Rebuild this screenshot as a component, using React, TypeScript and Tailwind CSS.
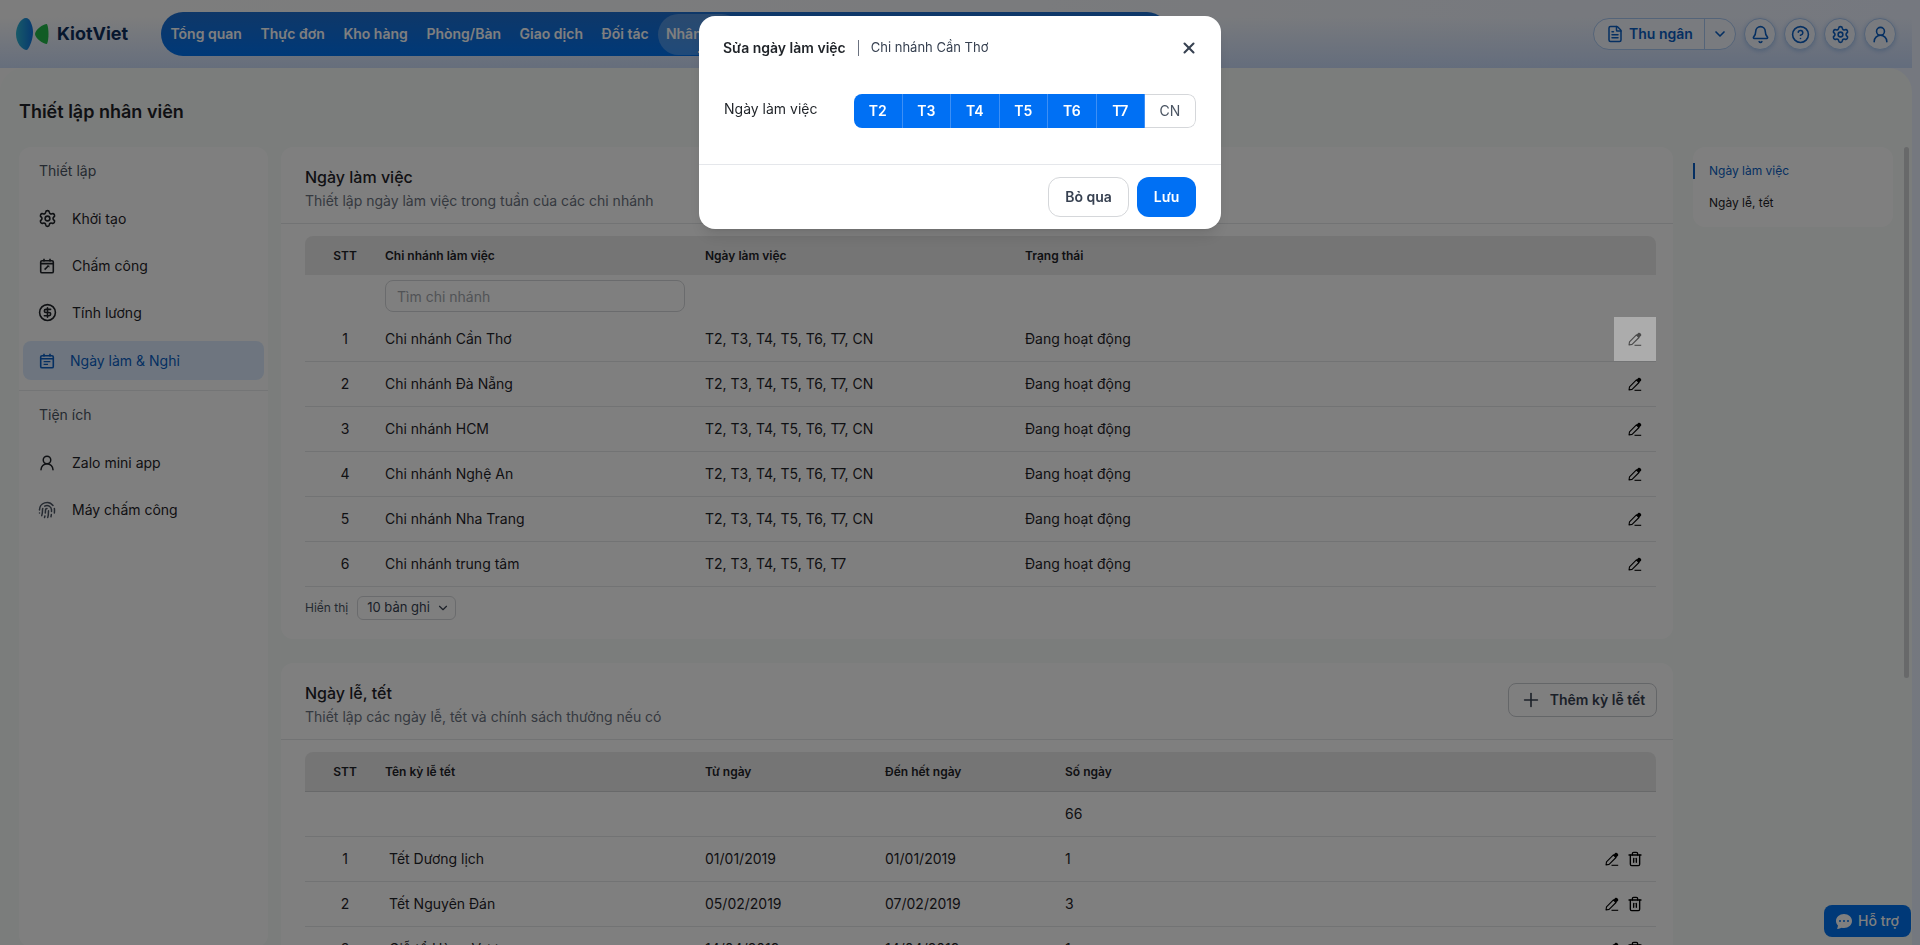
import { Bell, ChevronDown, CircleDollarSign, CircleHelp, FileText, Fingerprint, Plus, Settings, Trash2, UserRound, X } from 'lucide-react';
import { BsChatDotsFill } from 'react-icons/bs';

const branches = [
    { name: 'Chi nhánh Cần Thơ', days: 'T2, T3, T4, T5, T6, T7, CN' },
    { name: 'Chi nhánh Đà Nẵng', days: 'T2, T3, T4, T5, T6, T7, CN' },
    { name: 'Chi nhánh HCM', days: 'T2, T3, T4, T5, T6, T7, CN' },
    { name: 'Chi nhánh Nghệ An', days: 'T2, T3, T4, T5, T6, T7, CN' },
    { name: 'Chi nhánh Nha Trang', days: 'T2, T3, T4, T5, T6, T7, CN' },
    { name: 'Chi nhánh trung tâm', days: 'T2, T3, T4, T5, T6, T7' },
];

const holidays = [
    { name: 'Tết Dương lịch', from: '01/01/2019', to: '01/01/2019', count: '1' },
    { name: 'Tết Nguyên Đán', from: '05/02/2019', to: '07/02/2019', count: '3' },
    { name: 'Giỗ tổ Hùng Vương', from: '14/04/2019', to: '14/04/2019', count: '1' },
];

const navItems = ['Tổng quan', 'Thực đơn', 'Kho hàng', 'Phòng/Bàn', 'Giao dịch', 'Đối tác'];
const weekDays = ['T2', 'T3', 'T4', 'T5', 'T6', 'T7'];

function Logo() {
    return (
        <svg width="34" height="34" viewBox="0 0 34 34" className="shrink-0">
            <defs>
                <linearGradient id="lens" x1="0" y1="0" x2="1" y2="0">
                    <stop offset="0" stopColor="#2fb4d0" />
                    <stop offset="1" stopColor="#0f74e0" />
                </linearGradient>
            </defs>
            <path d="M10 1 C14 1 17 9 17 15 C17 22 14 30 11 33 C6 33 0 26 0 17 C0 9 5 1 10 1 Z" fill="url(#lens)" />
            <path d="M31 7 C33 12 33 22 31 27 C27 27 19 21 19 17 C19 13 27 7 31 7 Z" fill="#22b84a" />
        </svg>
    );
}

function PencilIcon({ className = '' }: { className?: string }) {
    return (
        <svg width="14" height="14" viewBox="0 0 14 14" fill="none" className={className}>
            <path d="M1 13 L1.5 9.8 L8.4 2.9 L11 5.5 L4.1 12.4 Z" stroke="currentColor" strokeWidth="1.1" strokeLinejoin="round" />
            <path d="M8.4 2.9 L10 1.2 C10.8 0.5 11.8 0.6 12.6 1.4 C13.4 2.2 13.5 3.2 12.8 3.9 L11 5.5 Z" fill="currentColor" />
            <path d="M6.5 13.3 H13.2" stroke="currentColor" strokeWidth="1.1" />
        </svg>
    );
}

function TimesheetIcon() {
    return (
        <svg width="16" height="16" viewBox="0 0 16 16" fill="none" className="text-[#1f2328]">
            <rect x="1.7" y="2.7" width="12.6" height="12.1" rx="1.4" stroke="currentColor" strokeWidth="1.6" />
            <path d="M1.7 5.6 H14.3 M5 0.8 V3.4 M11 0.8 V3.4" stroke="currentColor" strokeWidth="1.6" />
            <path d="M5.6 11.6 L9.4 7.8" stroke="currentColor" strokeWidth="1.6" />
            <path d="M8.2 7.6 H10.4 V9.8 Z" fill="currentColor" />
        </svg>
    );
}

function WorkdayIcon() {
    return (
        <svg width="16" height="16" viewBox="0 0 16 16" fill="none" className="text-[#0a5fc4]">
            <rect x="1.7" y="2.7" width="12.6" height="12.1" rx="1.4" stroke="currentColor" strokeWidth="1.6" />
            <path d="M1.7 5.8 H14.3 M5 0.8 V3.4 M11 0.8 V3.4" stroke="currentColor" strokeWidth="1.6" />
            <path d="M4.6 8.6 H11.4 M4.6 11.4 H9" stroke="currentColor" strokeWidth="1.4" />
        </svg>
    );
}

function SideItem({ icon, label }: { icon: React.ReactNode; label: string }) {
    return (
        <div className="flex h-[47px] items-center gap-[17px] pl-5 text-sm text-[#1f2328]">
            <span className="flex w-4 justify-center">{icon}</span>
            <span>{label}</span>
        </div>
    );
}

function CircleButton({ children }: { children: React.ReactNode }) {
    return (
        <div className="flex h-8 w-8 items-center justify-center rounded-full border border-[#a9c8f2] bg-[#f3f7ff] text-[#0a5fc4] shadow-[0_1px_4px_rgba(10,95,196,0.25)]">
            {children}
        </div>
    );
}

function CardHeader({ title, subtitle, action }: { title: string; subtitle: string; action?: React.ReactNode }) {
    return (
        <div className="flex h-[77px] items-center justify-between border-b border-[#e4e6e8] pr-4 pl-6">
            <div className="pt-[7px]">
                <h2 className="text-base leading-6 font-medium text-[#1f2328]">{title}</h2>
                <p className="text-sm leading-6 text-[#6b7280]">{subtitle}</p>
            </div>
            {action}
        </div>
    );
}

const branchGrid = 'grid grid-cols-[80px_320px_320px_1fr_42px] items-center';
const holidayGrid = 'grid grid-cols-[80px_320px_180px_180px_1fr_64px] items-center';

export default function App() {
    return (
        <div className="relative h-[945px] w-[1920px] overflow-hidden bg-[linear-gradient(100deg,#fbfbfb_0%,#f4f6fa_50%,#e9f0ff_100%)] font-['Inter',sans-serif]">
            {/* Top bar */}
            <header className="flex h-[68px] w-[1912px] items-center bg-[linear-gradient(180deg,rgba(255,255,255,0)_25%,rgba(180,205,248,0.65)_100%)] pr-4 pl-4">
                <Logo />
                <span className="ml-[7px] text-lg font-bold text-[#0f2f5c]">KiotViet</span>
                <nav className="ml-[33px] flex h-11 w-[1008px] items-center rounded-full bg-[linear-gradient(180deg,#1e6fd0_0%,#0072f0_100%)] text-sm font-semibold text-white">
                    {navItems.map((item) => (
                        <span key={item} className="px-[9.3px]">{item}</span>
                    ))}
                    <span className="relative flex h-[41px] items-center rounded-full bg-white/25 px-2">
                        Nhân viên
                        <span className="absolute right-2 bottom-[2px] h-[2px] w-[36px] bg-white" />
                    </span>
                </nav>
                <div className="ml-auto flex items-center gap-2">
                    <div className="flex h-8 w-[143px] items-center rounded-full border border-[#a9c8f2] bg-[#f3f7ff] text-sm font-semibold text-[#0a5fc4]">
                        <div className="flex h-full flex-1 items-center gap-[5px] pl-[12px]">
                            <FileText size={18} />
                            <span>Thu ngân</span>
                        </div>
                        <div className="flex h-full w-[31px] items-center justify-center border-l border-[#a9c8f2]">
                            <ChevronDown size={16} strokeWidth={2.5} />
                        </div>
                    </div>
                    <CircleButton><Bell size={19} /></CircleButton>
                    <CircleButton><CircleHelp size={19} /></CircleButton>
                    <CircleButton><Settings size={19} /></CircleButton>
                    <CircleButton><UserRound size={19} /></CircleButton>
                </div>
            </header>

            {/* Page panel */}
            <main className="relative h-[877px] w-[1912px] overflow-hidden rounded-t-3xl bg-[#f6faf8]">
                <h1 className="flex h-[79px] items-center pt-[9px] pl-[19px] text-lg font-semibold text-[#1f2328]">Thiết lập nhân viên</h1>
                <div className="flex items-start pl-[19px]">
                    {/* Left menu */}
                    <aside className="h-[800px] w-[249px] shrink-0 rounded-xl bg-white">
                        <div className="flex h-[48px] items-center pl-5 text-sm text-[#4b5563]">Thiết lập</div>
                        <SideItem icon={<Settings size={19} className="shrink-0" />} label="Khởi tạo" />
                        <SideItem icon={<TimesheetIcon />} label="Chấm công" />
                        <SideItem icon={<CircleDollarSign size={19} className="shrink-0" />} label="Tính lương" />
                        <div className="mx-[4px] mt-[5px] flex h-[39px] w-[241px] items-center gap-[15px] rounded-lg bg-[#dcebff] pl-[16px] text-sm text-[#0a5fc4]">
                            <WorkdayIcon />
                            <span>Ngày làm &amp; Nghỉ</span>
                        </div>
                        <div className="mt-[10px] border-t border-[#e8eaec]" />
                        <div className="flex h-[48px] items-center pl-5 text-sm text-[#4b5563]">Tiện ích</div>
                        <SideItem icon={<UserRound size={18} className="shrink-0" />} label="Zalo mini app" />
                        <SideItem icon={<Fingerprint size={18} className="shrink-0 text-[#4b5563]" />} label="Máy chấm công" />
                    </aside>

                    {/* Content */}
                    <div className="ml-[13px] flex w-[1392px] shrink-0 flex-col gap-6">
                        <section className="h-[492px] rounded-xl bg-white">
                            <CardHeader title="Ngày làm việc" subtitle="Thiết lập ngày làm việc trong tuần của các chi nhánh" />
                            <div className="mx-6 mt-3 w-[1351px]">
                                <div className={`${branchGrid} h-[39px] rounded-t-lg bg-[#ebebeb] text-xs font-semibold text-[#1f2328]`}>
                                    <span className="text-center">STT</span>
                                    <span>Chi nhánh làm việc</span>
                                    <span>Ngày làm việc</span>
                                    <span>Trạng thái</span>
                                </div>
                                <div className={`${branchGrid} h-[42px]`}>
                                    <span />
                                    <input
                                        readOnly
                                        placeholder="Tìm chi nhánh"
                                        className="h-8 w-[300px] rounded-lg border border-[#d5d7da] bg-white px-[11px] text-sm outline-none placeholder:text-[#a3a7ad]"
                                    />
                                </div>
                                {branches.map((branch, i) => (
                                    <div key={branch.name} className={`${branchGrid} h-[45px] border-b border-[#e4e6e8] text-sm text-[#1f2328]`}>
                                        <span className="text-center">{i + 1}</span>
                                        <span>{branch.name}</span>
                                        <span>{branch.days}</span>
                                        <span>Đang hoạt động</span>
                                        {i === 0 ? (
                                            <span className="relative z-50 flex h-[44px] items-center justify-center bg-[#acacac] text-[#4a4a4a]">
                                                <PencilIcon />
                                            </span>
                                        ) : (
                                            <span className="flex justify-center text-black"><PencilIcon /></span>
                                        )}
                                    </div>
                                ))}
                                <div className="mt-[9px] flex items-center gap-[9px] text-xs text-[#4b5563]">
                                    <span>Hiển thị</span>
                                    <div className="flex h-6 w-[99px] items-center justify-between rounded-md border border-[#d5d7da] pr-[5px] pl-[9px] text-[#374151]">
                                        <span className="text-[13px]">10 bản ghi</span>
                                        <ChevronDown size={14} />
                                    </div>
                                </div>
                            </div>
                        </section>

                        <section className="rounded-xl bg-white pb-6">
                            <CardHeader
                                title="Ngày lễ, tết"
                                subtitle="Thiết lập các ngày lễ, tết và chính sách thưởng nếu có"
                                action={
                                    <div className="mb-[3px] flex h-[34px] w-[149px] items-center justify-center gap-[8px] rounded-lg border border-[#c9ccd1] text-sm font-semibold text-[#374151]">
                                        <Plus size={22} strokeWidth={1.75} />
                                        <span>Thêm kỳ lễ tết</span>
                                    </div>
                                }
                            />
                            <div className="mx-6 mt-3 w-[1351px]">
                                <div className={`${holidayGrid} h-[40px] rounded-t-lg border-b border-[#d0d2d4] bg-[#ebebeb] text-xs font-semibold text-[#1f2328]`}>
                                    <span className="text-center">STT</span>
                                    <span>Tên kỳ lễ tết</span>
                                    <span>Từ ngày</span>
                                    <span>Đến hết ngày</span>
                                    <span>Số ngày</span>
                                </div>
                                <div className={`${holidayGrid} h-[45px] border-b border-[#e4e6e8] text-sm text-[#1f2328]`}>
                                    <span />
                                    <span />
                                    <span />
                                    <span />
                                    <span>66</span>
                                </div>
                                {holidays.map((holiday, i) => (
                                    <div key={holiday.name} className={`${holidayGrid} h-[45px] border-b border-[#e4e6e8] text-sm text-[#1f2328]`}>
                                        <span className="text-center">{i + 1}</span>
                                        <span className="pl-1">{holiday.name}</span>
                                        <span>{holiday.from}</span>
                                        <span>{holiday.to}</span>
                                        <span>{holiday.count}</span>
                                        <span className="flex items-center justify-end gap-[8px] pr-[13px] text-black">
                                            <PencilIcon />
                                            <Trash2 size={16} />
                                        </span>
                                    </div>
                                ))}
                            </div>
                        </section>
                    </div>

                    {/* Right anchors */}
                    <div className="ml-5 flex h-[80px] w-[200px] shrink-0 flex-col justify-center gap-[16px] rounded-xl bg-white pl-4 text-xs">
                        <div className="relative leading-4 text-[#0a5fc4]">
                            <span className="absolute top-0 -left-4 h-4 w-[2px] bg-[#0a5fc4]" />
                            Ngày làm việc
                        </div>
                        <div className="leading-4 text-[#1f2328]">Ngày lễ, tết</div>
                    </div>
                </div>
                {/* Scrollbar thumb */}
                <div className="absolute top-[79px] right-[3px] h-[531px] w-[5px] rounded-full bg-[#d0d2d4]" />
            </main>

            {/* Support */}
            <div className="fixed top-[905px] left-[1824px] flex h-8 w-[87px] items-center justify-center gap-[6px] rounded-lg bg-[#0072f0] text-sm font-medium text-white">
                <BsChatDotsFill size={16} />
                <span>Hỗ trợ</span>
            </div>

            {/* Modal */}
            <div className="fixed inset-0 z-40 flex items-start justify-center bg-black/50 pt-4">
                <div className="w-[522px] rounded-2xl bg-white shadow-lg">
                    <div className="flex h-[64px] items-center pr-[23px] pl-6">
                        <span className="text-sm font-semibold text-[#1f2328]">Sửa ngày làm việc</span>
                        <span className="mx-3 h-4 w-px bg-[#6b7280]" />
                        <span className="text-[13px] text-[#374151]">Chi nhánh Cần Thơ</span>
                        <X size={18} strokeWidth={2.75} className="ml-auto text-[#374151]" />
                    </div>
                    <div className="flex h-[85px] items-start border-b border-[#e5e7eb] pt-[14px] pr-6 pl-6">
                        <span className="w-[131px] pt-[3px] pl-px text-sm leading-6 text-[#1f2328]">Ngày làm việc</span>
                        <div className="flex h-[34px] w-[342px] overflow-hidden rounded-lg text-sm">
                            {weekDays.map((day) => (
                                <span key={day} className="flex flex-1 items-center justify-center border-r border-[#3d8ff5] bg-[#0070f4] font-semibold text-white last:border-r-0">
                                    {day}
                                </span>
                            ))}
                            <span className="flex w-[51px] shrink-0 items-center justify-center rounded-r-lg border border-l-0 border-[#d5d7da] text-[#4b5563]">CN</span>
                        </div>
                    </div>
                    <div className="flex h-[64px] items-center justify-end gap-2 pr-[25px] text-sm font-semibold">
                        <span className="flex h-10 w-[81px] items-center justify-center rounded-xl border border-[#d5d7da] text-[#374151]">Bỏ qua</span>
                        <span className="flex h-10 w-[59px] items-center justify-center rounded-xl bg-[#0070f4] text-white">Lưu</span>
                    </div>
                </div>
            </div>
        </div>
    );
}
